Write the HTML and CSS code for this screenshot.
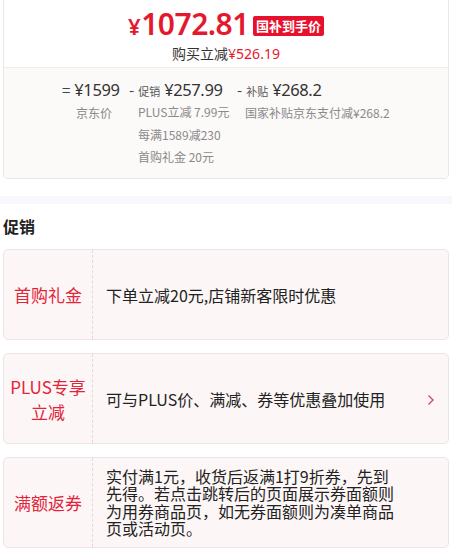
FILE: index.html
```html
<!DOCTYPE html>
<html lang="zh">
<head>
<meta charset="utf-8">
<link rel="stylesheet" href="styles.css">
</head>
<body>
<div class="page">
  <section class="price-card">
    <div class="price-top">
      <div class="price-line">
        <span class="price"><span class="yen">¥</span>1072.81</span>
        <span class="badge">国补到手价</span>
      </div>
      <div class="save">购买立减<span class="red">¥526.19</span></div>
    </div>
    <div class="breakdown">
      <div class="col col-base">
        <div class="main"><span class="op">=</span><span class="amt">¥1599</span></div>
        <div class="sub">京东价</div>
      </div>
      <div class="col col-promo">
        <div class="main"><span class="op">-</span><span class="tag">促销</span><span class="amt">¥257.99</span></div>
        <div class="sub">PLUS立减 7.99元</div>
        <div class="sub">每满1589减230</div>
        <div class="sub">首购礼金 20元</div>
      </div>
      <div class="col col-sub">
        <div class="main"><span class="op">-</span><span class="tag">补贴</span><span class="amt">¥268.2</span></div>
        <div class="sub">国家补贴京东支付减¥268.2</div>
      </div>
    </div>
  </section>

  <div class="band"></div>

  <h2 class="title">促销</h2>

  <div class="promo">
    <div class="promo-label">首购礼金</div>
    <div class="promo-body">下单立减20元,店铺新客限时优惠</div>
  </div>

  <div class="promo">
    <div class="promo-label">PLUS专享<br>立减</div>
    <div class="promo-body">可与PLUS价、满减、券等优惠叠加使用</div>
    <svg class="chev" width="8" height="12" viewBox="0 0 8 12"><path d="M1.5 1.5 L6 6 L1.5 10.5" fill="none" stroke="#c8466a" stroke-width="1.3"/></svg>
  </div>

  <div class="promo">
    <div class="promo-label">满额返券</div>
    <div class="promo-body multi">实付满1元，收货后返满1打9折券，先到先得。若点击跳转后的页面展示券面额则为用券商品页，如无券面额则为凑单商品页或活动页。</div>
  </div>
</div>
</body>
</html>
```

FILE: styles.css
```css
* { box-sizing: border-box; }
html, body { margin: 0; padding: 0; background: #fff; }
body {
  font-family: "Noto Sans CJK SC", "Noto Sans", sans-serif;
  color: #222;
}
.page { padding: 0 3px 0 3px; width: 452px; }

.price-card {
  border: 1px solid #ebe6e8;
  border-top: none;
  border-radius: 0 0 5px 5px;
  overflow: hidden;
}
.price-top {
  height: 68px;
  padding-top: 7px;
  display: flex;
  flex-direction: column;
  align-items: center;
  border-bottom: 1px solid #f0ebec;
  background: #fff;
}
.price-line { display: flex; align-items: center; gap: 4px; height: 36px; }
.price {
  font-family: "Noto Sans", sans-serif;
  font-weight: 600;
  font-size: 30px;
  color: #e4192e;
  letter-spacing: -0.5px;
  line-height: 36px;
}
.yen { font-size: 22px; margin-right: 1px; }
.badge {
  background: #e8112d;
  color: #fff;
  font-size: 13px;
  font-weight: 700;
  line-height: 20px;
  padding: 0 3px;
  border-radius: 2px;
  margin-top: 2px;
}
.save { font-size: 14px; line-height: 18px; color: #333; margin-top: 1px; }
.red { color: #e4192e; font-family: "Noto Sans", sans-serif; }

.breakdown {
  background: #fcf9f9;
  display: flex;
  padding: 10px 0 11px 58px;
  height: 110px;
}
.col { display: flex; flex-direction: column; }
.main { display: flex; align-items: baseline; height: 24px; white-space: nowrap; }
.op { font-size: 15px; color: #444; margin-right: 4px; }
.tag { font-size: 11px; color: #555; margin-right: 4px; }
.amt { font-family: "Noto Sans", sans-serif; font-size: 16.5px; color: #333; letter-spacing: -0.4px; }
.sub { font-size: 12px; color: #8a8a8a; line-height: 22.5px; white-space: nowrap; }
.col-base .sub { padding-left: 14px; }
.col-base { width: 67px; }
.col-promo { width: 108px; }
.col-promo .sub { padding-left: 9px; }
.col-sub .sub { padding-left: 8px; }

.band { height: 8px; background: #f7f7fc; margin: 17px -3px 0 -3px; }

.title {
  font-size: 16px;
  font-weight: 700;
  margin: 0;
  line-height: 22px;
  padding-top: 11px;
  color: #222;
}

.promo {
  margin-top: 13px;
  height: 91px;
  border: 1px solid #ece4e6;
  border-radius: 5px;
  background: #fcf6f6;
  display: flex;
  align-items: center;
  position: relative;
}
.title + .promo { margin-top: 12px; }
.promo-label {
  width: 89px;
  align-self: stretch;
  border-right: 1px dashed #e3d9db;
  display: flex;
  align-items: center;
  justify-content: center;
  text-align: center;
  color: #e2243a;
  font-size: 17px;
  line-height: 25px;
}
.promo-body {
  padding-left: 13px;
  font-size: 16px;
  color: #222;
  line-height: 20px;
}
.promo-body.multi { width: 303px; line-height: 17.5px; }
.chev { position: absolute; right: 13px; top: 40px; }
```
